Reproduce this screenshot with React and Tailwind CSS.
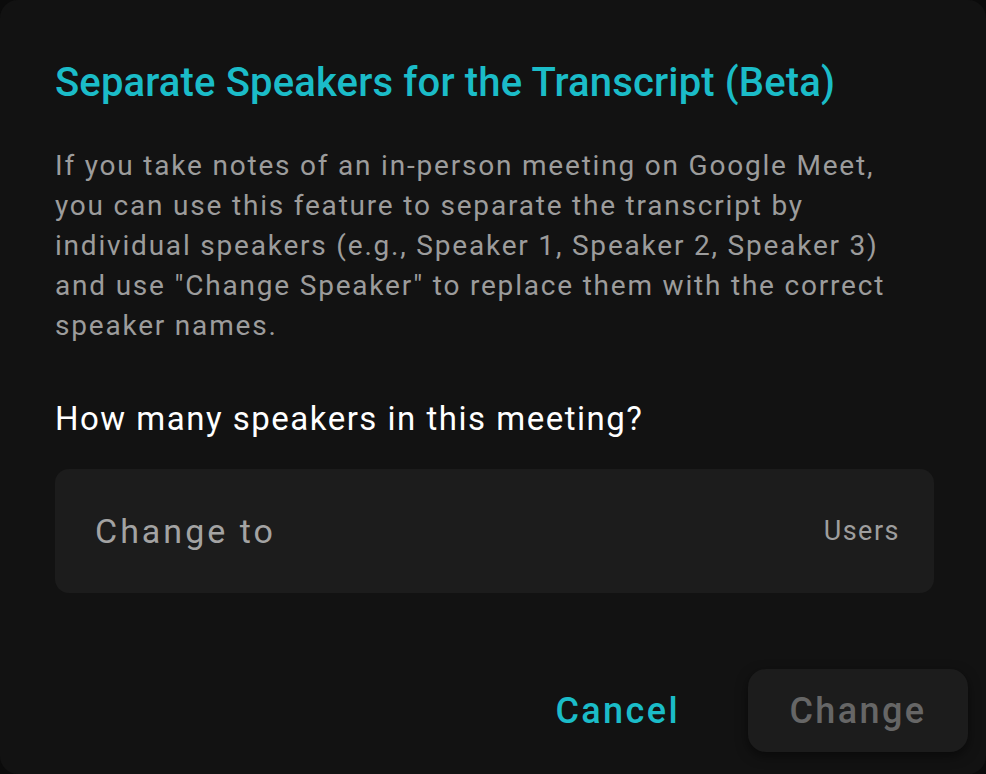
const bodyLines = [
  "If you take notes of an in-person meeting on Google Meet,",
  "you can use this feature to separate the transcript by",
  "individual speakers (e.g., Speaker 1, Speaker 2, Speaker 3)",
  'and use "Change Speaker" to replace them with the correct',
  "speaker names.",
];

export default function App() {
  return (
    <div className="w-[986px] h-[774px] bg-[#0b0b0b]" style={{ fontFamily: "Roboto, 'Noto Sans', sans-serif" }}>
      <div className="w-full h-full rounded-[18px] bg-[#121212] flex flex-col px-[55px] pt-[59px]">
        <h1 className="text-[40px] leading-[48px] font-medium tracking-[0.15px] text-[#1bbcc8] whitespace-nowrap">
          Separate Speakers for the Transcript (Beta)
        </h1>
        <div className="mt-[39px] text-[28px] leading-[40px] tracking-[1.8px] text-[#9c9c9c]">
          {bodyLines.map((line) => (
            <p key={line} className="whitespace-nowrap">{line}</p>
          ))}
        </div>
        <p className="mt-[53px] text-[33px] leading-[40px] tracking-[1.5px] text-white whitespace-nowrap">
          How many speakers in this meeting?
        </p>
        <div className="mt-[30px] -mr-[3px] h-[124px] rounded-[14px] bg-[#1c1c1c] flex items-center justify-between pl-[40px] pr-[34px]">
          <span className="text-[34px] leading-[40px] tracking-[3px] text-[#a3a3a3]">Change to</span>
          <span className="text-[27px] leading-[40px] tracking-[1.5px] text-[#9e9e9e]">Users</span>
        </div>
        <div className="mt-[76px] flex items-center justify-end gap-[68px] -mr-[37px]">
          <button className="text-[36px] leading-[40px] font-medium tracking-[2.4px] text-[#1bbcc8]">Cancel</button>
          <button className="w-[220px] h-[83px] rounded-[18px] bg-[#1c1c1c] shadow-[0_4px_12px_rgba(0,0,0,0.5)] text-[36px] leading-[40px] font-medium tracking-[2.4px] text-[#666666]">
            Change
          </button>
        </div>
      </div>
    </div>
  );
}
